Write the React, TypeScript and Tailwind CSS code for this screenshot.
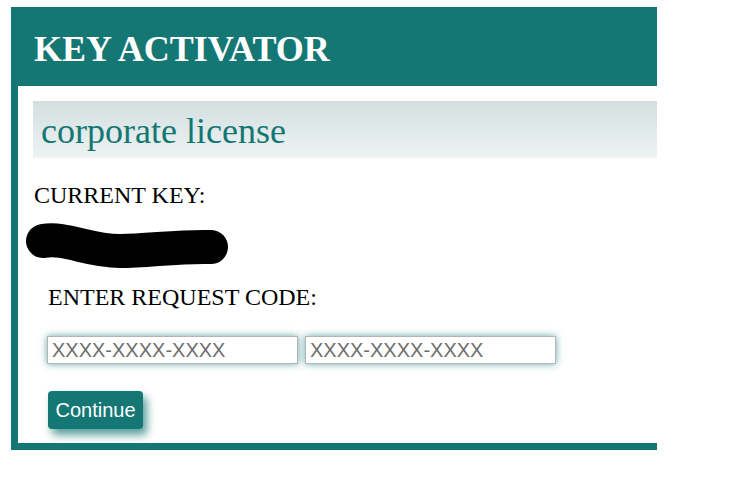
import { useState } from 'react';

const serif = "font-['Liberation_Serif','Times_New_Roman',serif]";
const sans = "font-['Liberation_Sans',Arial,sans-serif]";

function RedactedKey() {
  return (
    <svg width="204" height="46" viewBox="0 0 204 46" className="block">
      <path
        d="M17 18 C40 14 62 28 94 28 C122 28 152 23 185 24"
        fill="none"
        stroke="#000"
        strokeWidth="34"
        strokeLinecap="round"
        strokeLinejoin="round"
      />
    </svg>
  );
}

function CodeInput({ value, onChange }: { value: string; onChange: (v: string) => void }) {
  return (
    <input
      type="text"
      value={value}
      onChange={(e) => onChange(e.target.value)}
      placeholder="XXXX-XXXX-XXXX"
      className={`${sans} h-[28px] w-[251px] border border-[#b5b5b5] bg-white px-[4px] text-[20px] text-black outline-none shadow-[0_0_7px_rgba(20,119,116,0.65)] placeholder:text-[#6f6f6f]`}
    />
  );
}

export default function App() {
  const [first, setFirst] = useState('');
  const [second, setSecond] = useState('');

  return (
    <div className="min-h-[503px] w-[748px] bg-white pl-[11px] pt-[7px]">
      <div className="w-[646px]">
        <div className="flex h-[79px] items-center bg-[#147774] pl-[23px] pt-[4px]">
          <h1 className={`${serif} text-[36px] font-bold leading-none text-white`}>KEY ACTIVATOR</h1>
        </div>

        <div className="h-[364px] border-b-[7px] border-l-[7px] border-[#147774] pt-[15px]">
          <div className="ml-[15px] flex h-[57px] items-center bg-gradient-to-b from-[#d3dfdf] to-[#eef3f3] pl-[8px] pt-[2px]">
            <h2 className={`${serif} text-[36px] leading-none text-[#147774]`}>corporate license</h2>
          </div>

          <div className={`${serif} ml-[16px] mt-[25px] text-[24px] leading-none text-black`}>CURRENT KEY:</div>

          <div className="ml-[8px] mt-[16px]">
            <RedactedKey />
          </div>

          <div className="pl-[30px]">
            <div className={`${serif} mt-[16px] text-[24px] leading-none text-black`}>ENTER REQUEST CODE:</div>

            <div className="-ml-[1px] mt-[27px] flex gap-[7px]">
              <CodeInput value={first} onChange={setFirst} />
              <CodeInput value={second} onChange={setSecond} />
            </div>

            <button
              type="button"
              className={`${sans} mt-[27px] h-[38px] w-[95px] rounded-[4px] bg-[#147774] text-[20px] text-white shadow-[4px_6px_9px_rgba(20,119,116,0.7)]`}
            >
              Continue
            </button>
          </div>
        </div>
      </div>
    </div>
  );
}
